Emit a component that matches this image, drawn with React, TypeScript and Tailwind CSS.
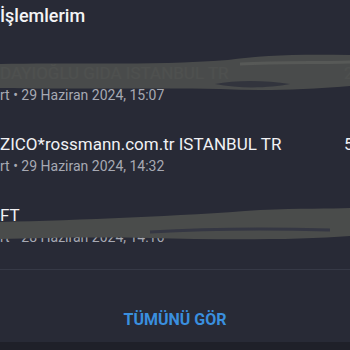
import React from 'react'

type Tx = { title: string; meta: string; amount: string }

const items: Tx[] = [
  { title: 'DAYIOĞLU GIDA ISTANBUL TR', meta: 'rt • 29 Haziran 2024, 15:07', amount: '245,00 TL' },
  { title: 'ZICO*rossmann.com.tr ISTANBUL TR', meta: 'rt • 29 Haziran 2024, 14:32', amount: '589,90 TL' },
  { title: 'FT', meta: 'rt • 28 Haziran 2024, 14:16', amount: '1.500,00 TL' },
]

const Row: React.FC<{ tx: Tx }> = ({ tx }) => (
  <div className="flex pt-[13px] pb-[14px]">
    <div className="w-[344px] shrink-0">
      <div className="text-[17px] leading-[24px] text-[#f1f1f4] whitespace-nowrap">{tx.title}</div>
      <div className="text-[14px] leading-[20px] text-[#a7a9b3] whitespace-nowrap">{tx.meta}</div>
    </div>
    <div className="text-[17px] leading-[24px] text-[#f1f1f4] whitespace-nowrap">{tx.amount}</div>
  </div>
)

const Scribbles: React.FC = () => (
  <svg className="absolute inset-0 pointer-events-none" width="350" height="350" viewBox="0 0 350 350">
    {/* redaction over first row */}
    <path
      d="M0 64 C60 62 150 66 228 60 C260 55 300 54 350 55 L350 86 C300 90 260 91 220 89 C150 88 60 89 0 88 Z"
      fill="#4a4c4b"
      opacity="0.98"
    />
    <path d="M215 84 C235 80 265 80 290 84 C270 88 240 89 215 84 Z" fill="#30323c" opacity="0.9" />
    <path d="M240 64 C280 62 320 63 350 62" stroke="#575957" strokeWidth="3" fill="none" />
    {/* redaction over third row */}
    <path
      d="M0 222 C80 220 180 216 260 210 C300 208 330 209 350 208 L350 236 C300 240 220 240 150 238 C90 237 40 238 0 239 Z"
      fill="#4a4c4b"
    />
    <path d="M150 232 C200 229 260 228 330 230" stroke="#353743" strokeWidth="3" fill="none" />
  </svg>
)

const App: React.FC = () => {
  return (
    <div className="relative w-[350px] h-[350px] overflow-hidden bg-[#282a36] font-['Roboto',sans-serif]">
      <div className="h-[342px] flex flex-col">
        <h2 className="pt-[2px] text-[18px] leading-[28px] font-medium text-[#f4f4f6]">İşlemlerim</h2>
        <div className="mt-[18px] flex flex-col">
          {items.map((tx) => (
            <Row key={tx.meta} tx={tx} />
          ))}
        </div>
        <div className="mt-[8px] h-px bg-[#363946]" />
        <div className="flex-1 flex justify-center pt-[27px]">
          <button className="text-[16px] leading-[20px] font-bold text-[#3a8fdf]">TÜMÜNÜ GÖR</button>
        </div>
      </div>
      <div className="h-[8px] bg-[#1f2029]" />
      <Scribbles />
    </div>
  )
}

export default App
